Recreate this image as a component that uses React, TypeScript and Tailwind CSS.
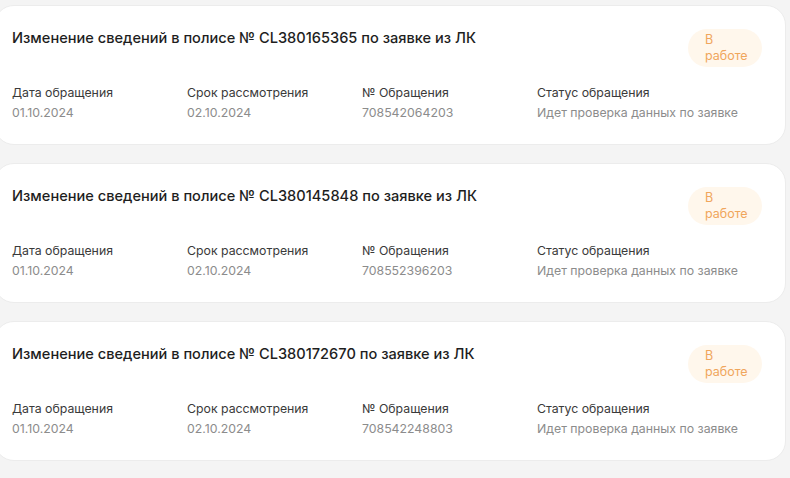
type Request = {
  id: number;
  policy: string;
  date: string;
  deadline: string;
  number: string;
  status: string;
};

const requests: Request[] = [
  { id: 1, policy: 'CL380165365', date: '01.10.2024', deadline: '02.10.2024', number: '708542064203', status: 'Идет проверка данных по заявке' },
  { id: 2, policy: 'CL380145848', date: '01.10.2024', deadline: '02.10.2024', number: '708552396203', status: 'Идет проверка данных по заявке' },
  { id: 3, policy: 'CL380172670', date: '01.10.2024', deadline: '02.10.2024', number: '708542248803', status: 'Идет проверка данных по заявке' },
];

function Field({ label, value }: { label: string; value: string }) {
  return (
    <div className="w-[175px] shrink-0 whitespace-nowrap">
      <p className="text-[12.3px] leading-[20px] text-[#3a3a3a]">{label}</p>
      <p className="text-[12.3px] leading-[20px] text-[#8c8c8c]">{value}</p>
    </div>
  );
}

export default function App() {
  return (
    <div className="min-h-[478px] w-[790px] overflow-hidden bg-[#f4f4f4] pt-[5px] font-['Inter',sans-serif]">
      <div className="-ml-[6px] mr-[4px] flex flex-col gap-[18px]">
        {requests.map((r) => (
          <div key={r.id} className="h-[140px] rounded-[20px] border border-[#ececec] bg-white pl-[17px] pr-[23px] pt-[22px]">
            <div className="flex items-start justify-between">
              <h2 className="text-[14.6px] font-medium leading-[20px] text-[#1e1e1e]">
                Изменение сведений в полисе № {r.policy} по заявке из ЛК
              </h2>
              <span className="mt-[1px] w-[74px] rounded-full bg-[#fff7ec] px-[17px] py-[3px] text-[12.5px] leading-[16px] text-[#f0a65c]">
                В работе
              </span>
            </div>
            <div className="mt-[16px] flex">
              <Field label="Дата обращения" value={r.date} />
              <Field label="Срок рассмотрения" value={r.deadline} />
              <Field label="№ Обращения" value={r.number} />
              <Field label="Статус обращения" value={r.status} />
            </div>
          </div>
        ))}
      </div>
    </div>
  );
}
